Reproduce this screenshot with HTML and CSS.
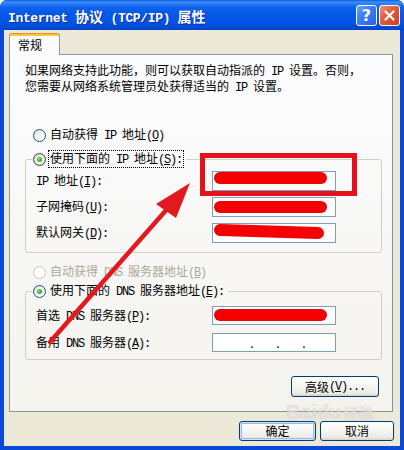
FILE: index.html
```html
<!DOCTYPE html>
<html lang="zh-CN">
<head>
<meta charset="utf-8">
<title>Internet 协议 (TCP/IP) 属性</title>
<link rel="stylesheet" href="styles.css">
</head>
<body>
<div class="window">
  <div class="titlebar">
    <div class="title"><span class="ta">Internet </span>协议<span class="ta"> (TCP/IP) </span>属性</div>
    <div class="tbtn help">?</div>
    <div class="tbtn close"><svg width="13" height="13" viewBox="0 0 13 13"><path d="M2.5 2.5 L10.5 10.5 M10.5 2.5 L2.5 10.5" stroke="#fff" stroke-width="2.2" stroke-linecap="round"/></svg></div>
  </div>
  <div class="client">
    <div class="tabs"><div class="tab">常规</div></div>
    <div class="panel">
      <p class="intro">如果网络支持此功能，则可以获取自动指派的<span class="a"> IP </span>设置。否则，<br>您需要从网络系统管理员处获得适当的<span class="a"> IP </span>设置。</p>

      <div class="opt first"><span class="radio"></span><span class="lbl">自动获得<span class="a"> IP </span>地址<span class="a">(<u>O</u>)</span></span></div>

      <fieldset class="group g1">
        <legend><div class="opt"><span class="radio on hot"></span><span class="lbl focus">使用下面的<span class="a"> IP </span>地址<span class="a">(<u>S</u>):</span></span></div></legend>
        <div class="rows">
          <span class="flbl"><span class="a">IP </span>地址<span class="a">(<u>I</u>):</span></span><span class="field"></span>
          <span class="flbl">子网掩码<span class="a">(<u>U</u>):</span></span><span class="field"></span>
          <span class="flbl">默认网关<span class="a">(<u>D</u>):</span></span><span class="field"></span>
        </div>
      </fieldset>

      <div class="opt dis-row"><span class="radio dis"></span><span class="lbl dis">自动获得<span class="a"> DNS </span>服务器地址<span class="a">(<u>B</u>)</span></span></div>

      <fieldset class="group g2">
        <legend><div class="opt"><span class="radio on"></span><span class="lbl">使用下面的<span class="a"> DNS </span>服务器地址<span class="a">(<u>E</u>):</span></span></div></legend>
        <div class="rows">
          <span class="flbl">首选<span class="a"> DNS </span>服务器<span class="a">(<u>P</u>):</span></span><span class="field"></span>
          <span class="flbl">备用<span class="a"> DNS </span>服务器<span class="a">(<u>A</u>):</span></span><span class="field ip"><span>.</span><span>.</span><span>.</span></span>
        </div>
      </fieldset>

      <div class="adv-row"><span class="btn adv">高级<span class="a">(<u>V</u>)...</span></span></div>
    </div>
    <div class="dlg-btns">
      <span class="btn def">确定</span>
      <span class="btn cancel">取消</span>
    </div>
  </div>

  <div class="watermark"><span class="wm-big">Bai<span class="paw">du</span></span><span class="wm-cn">经验</span></div>

  <svg class="annot" width="404" height="450" viewBox="0 0 404 450">
    <rect x="202.5" y="155.5" width="152" height="38" fill="none" stroke="#E3121B" stroke-width="5"/>
    <g stroke="#F40000" stroke-width="12" stroke-linecap="round">
      <line x1="220" y1="178" x2="321" y2="178"/>
      <line x1="220" y1="207" x2="321" y2="207"/>
      <line x1="220" y1="230" x2="318" y2="233"/>
      <line x1="220" y1="315" x2="321" y2="315"/>
    </g>
    <line x1="50" y1="342" x2="168" y2="208" stroke="#E3191F" stroke-width="4.5" stroke-linecap="round"/>
    <polygon points="190,183 156,204 176,218" fill="#E3191F"/>
  </svg>
</div>
</body>
</html>
```

FILE: styles.css
```css
* { box-sizing: border-box; }
html, body { margin: 0; padding: 0; }
body {
  width: 404px;
  height: 450px;
  overflow: hidden;
  background: #fff;
  font: 12px/14px "Noto Sans CJK SC", sans-serif;
  color: #000;
}
.a {
  font-family: "Liberation Mono", "Noto Sans CJK SC", monospace;
  letter-spacing: -1.2px;
}
u { text-decoration: underline; text-underline-offset: 1px; }

.window {
  position: relative;
  width: 404px;
  height: 450px;
  background: #0A48D8;
  border-radius: 7px 7px 0 0;
  display: flex;
  flex-direction: column;
}

/* title bar */
.titlebar {
  height: 30px;
  flex: none;
  display: flex;
  align-items: flex-start;
  padding: 0 4px 0 8px;
  border-radius: 7px 7px 0 0;
  background: linear-gradient(to bottom,
    #0A5BE6 0, #3D8FF6 2px, #2C7CF4 4px, #0F64EC 7px,
    #055AEA 12px, #0356E6 20px, #0050DE 25px, #0046D0 29px, #003FC4 30px);
}
.title {
  flex: 1;
  margin-top: 8px;
  color: #fff;
  font: bold 14px/16px "Noto Sans CJK SC", sans-serif;
  text-shadow: 1px 1px 0 #0B2E9C;
  white-space: nowrap;
}
.ta {
  font: bold 13px/16px "Liberation Mono", monospace;
  letter-spacing: -0.35px;
}
.tbtn {
  flex: none;
  width: 21px;
  height: 21px;
  margin-top: 5px;
  margin-left: 2px;
  border: 1px solid #fff;
  border-radius: 3px;
  display: flex;
  align-items: center;
  justify-content: center;
}
.help {
  background: linear-gradient(135deg, #6FA3FB 0%, #3F7FF2 40%, #2362E2 100%);
  color: #fff;
  font: bold 16px/1 "DejaVu Sans", sans-serif;
}
.close {
  background: linear-gradient(135deg, #F0917A 0%, #E35F3E 40%, #C7401F 100%);
}

/* client */
.client {
  flex: 1;
  margin: 0 4px 4px;
  background: #ECE9D8;
  padding: 3px 0 0 5px;
  display: flex;
  flex-direction: column;
}
.tabs { height: 21px; display: flex; }
.tab {
  position: relative;
  z-index: 1;
  width: 51px;
  height: 22px;
  border: 1px solid #919B9C;
  border-top: none;
  border-bottom: none;
  border-radius: 3px 3px 0 0;
  background: linear-gradient(#E68B2C 0 1px, #FFC83C 1px 3px, #FCFCFE 3px);
  padding: 5px 0 0 8px;
  font-size: 12px;
  line-height: 14px;
}
.panel {
  width: 384px;
  height: 358px;
  border: 1px solid #919B9C;
  border-right-color: #8A9394;
  border-bottom-color: #8A9394;
  background: linear-gradient(#FCFCFE, #F4F3EE);
  padding: 8px 10px 0 15px;
}
.intro {
  margin: 0;
  line-height: 13px;
  white-space: nowrap;
}

.opt {
  height: 16px;
  display: flex;
  align-items: center;
  white-space: nowrap;
}
.opt.first { margin-top: 32px; padding-left: 8px; }
.dis-row { margin-top: 11px; padding-left: 8px; }
.radio {
  flex: none;
  position: relative;
  width: 13px;
  height: 13px;
  border-radius: 50%;
  border: 1px solid #1C5180;
  background: linear-gradient(135deg, #DCDBD3 0%, #F3F3EF 45%, #FFFFFF 80%);
}
.radio.hot { box-shadow: inset 0 0 0 1px #F4D38A; }
.radio.on::after {
  content: "";
  position: absolute;
  left: 3px;
  top: 3px;
  width: 5px;
  height: 5px;
  border-radius: 50%;
  background: radial-gradient(circle at 40% 40%, #8DEA7F 0%, #3DB83A 45%, #21A121 100%);
}
.radio.dis { border-color: #CAC8BB; background: #fff; }
.lbl { margin-left: 3px; padding: 0 1px; line-height: 14px; }
.lbl.dis { color: #ACA899; }
.lbl.focus { outline: 1px dotted #000; outline-offset: 0; }

.group {
  margin: 8px 0 0;
  padding: 0;
  border: 1px solid #D0D0BF;
  border-radius: 3px;
  min-inline-size: 0;
}
.group legend {
  margin-left: 6px;
  padding: 0 3px 0 1px;
}
.rows {
  display: grid;
  grid-template-columns: 176px 124px;
  align-items: center;
  padding-left: 10px;
}
.g1 .rows { padding-top: 4px; padding-bottom: 9px; row-gap: 6px; grid-auto-rows: 20px; }
.g2 .rows { padding-top: 7px; padding-bottom: 7px; row-gap: 8px; grid-auto-rows: 19px; }
.g2 { margin-top: 3px; }
.flbl { white-space: nowrap; }
.field {
  height: 100%;
  border: 1px solid #7F9DB9;
  background: #fff;
}
.field.ip {
  display: flex;
  justify-content: space-around;
  align-items: flex-end;
  padding: 0 18px 3px 26px;
  line-height: 10px;
}

.adv-row {
  margin-top: 16px;
  display: flex;
  justify-content: flex-end;
  padding-right: 3px;
}
.btn {
  display: inline-flex;
  align-items: center;
  justify-content: center;
  height: 21px;
  border: 1px solid #003C74;
  border-radius: 3px;
  background: linear-gradient(#FFFFFF 0%, #F7F7F4 40%, #ECEBE6 85%, #D6D0C5 100%);
  white-space: nowrap;
}
.btn.adv { width: 88px; }
.dlg-btns {
  margin-top: 9px;
  display: flex;
  justify-content: flex-end;
  gap: 4px;
  padding-right: 6px;
}
.btn.def {
  width: 77px;
  height: 20px;
  box-shadow: inset 0 0 0 1px #CEE7FF, inset 0 0 0 2px #98B8EA;
}
.btn.cancel { width: 74px; height: 20px; }

/* watermark & annotations (overlays) */
.watermark {
  position: absolute;
  left: 286px;
  top: 401px;
  width: 110px;
  color: rgba(255, 255, 255, 0.5);
  text-shadow: 0 0 1px rgba(130, 130, 130, 0.4);
  pointer-events: none;
  white-space: nowrap;
}
.wm-big { font: bold 20px/22px "Liberation Sans", sans-serif; }
.wm-cn { font: bold 15px/22px "Noto Sans CJK SC", sans-serif; margin-left: 2px; }
.annot {
  position: absolute;
  left: 0;
  top: 0;
  pointer-events: none;
}
```
